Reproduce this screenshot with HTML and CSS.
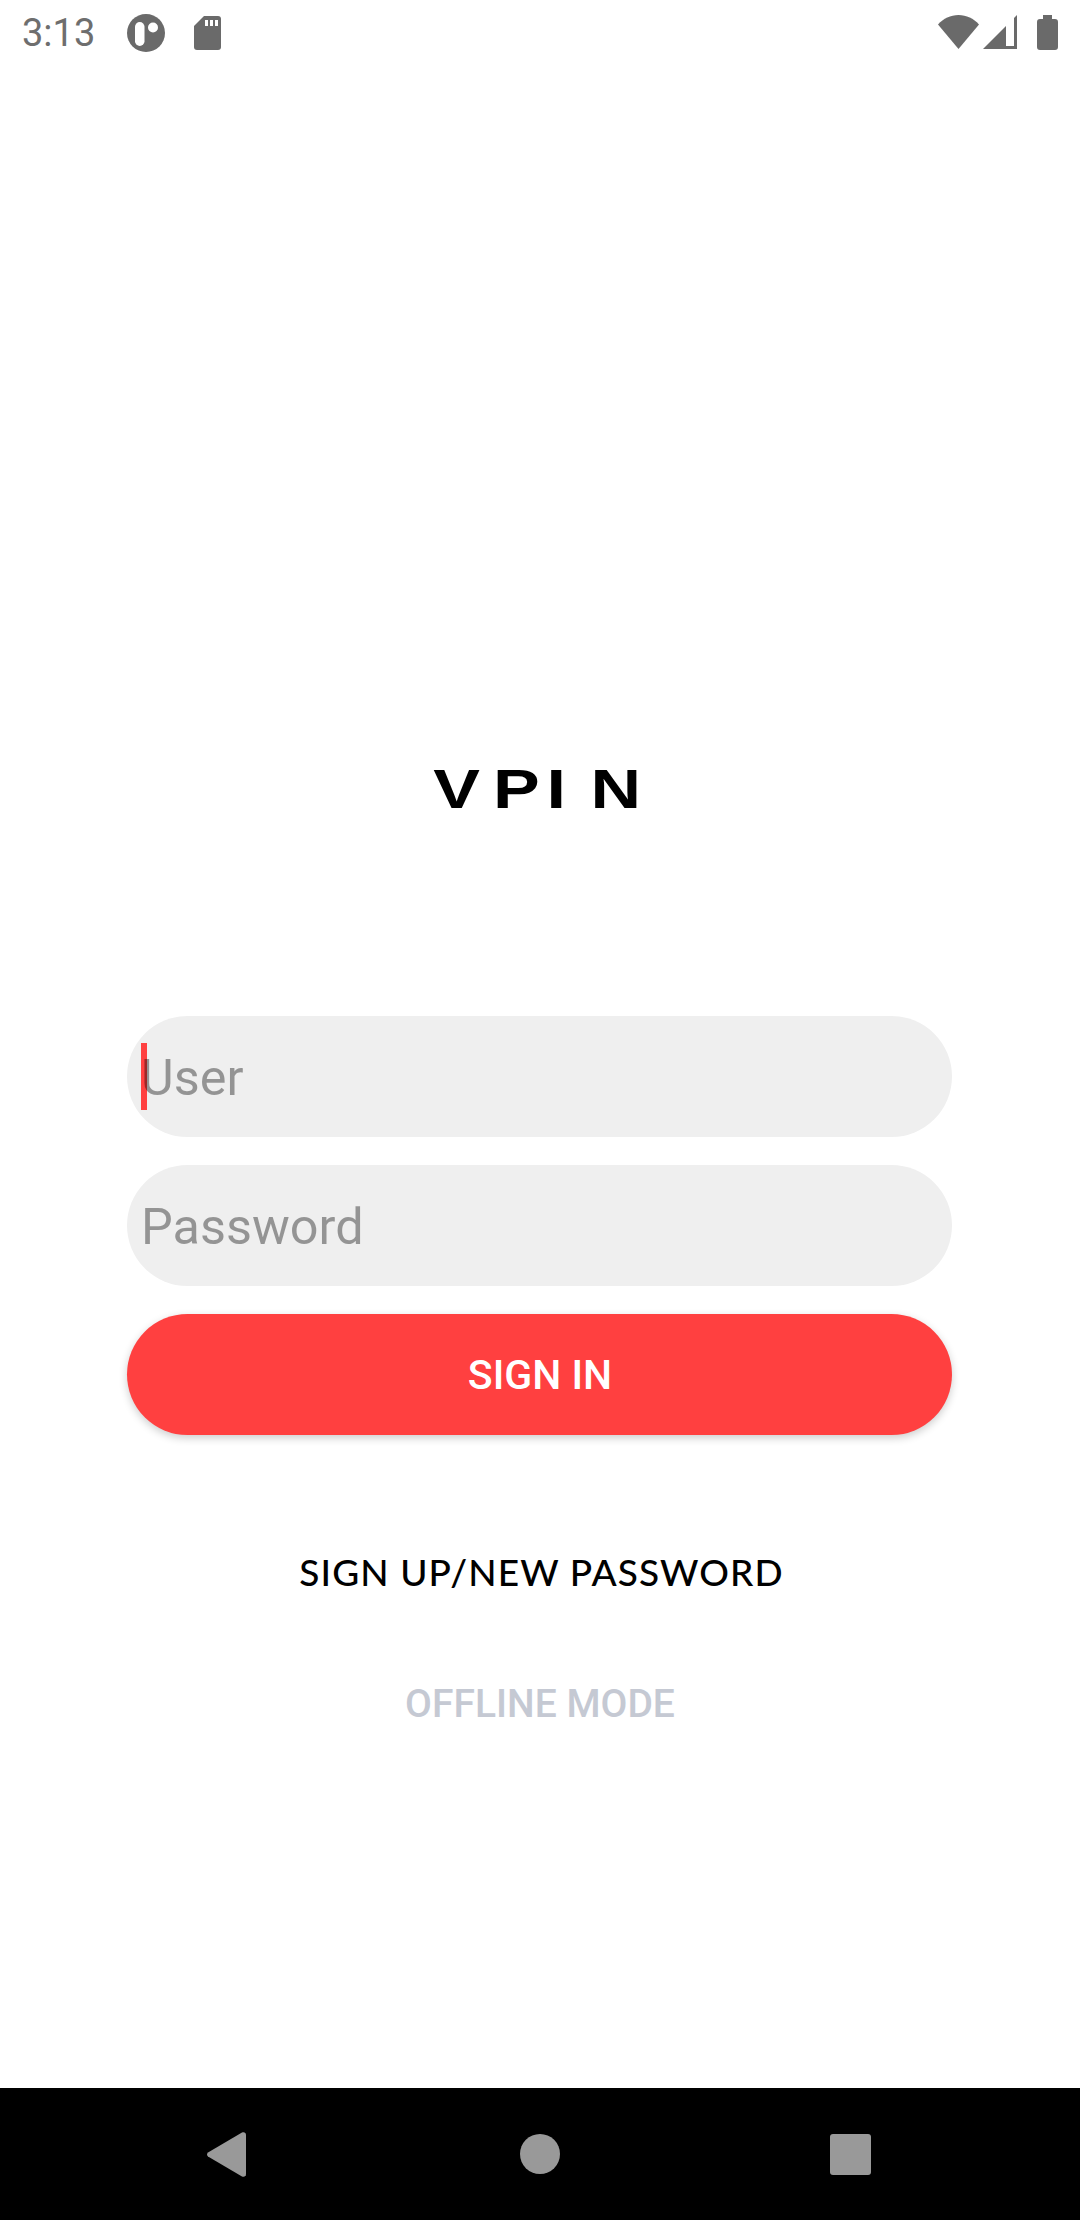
FILE: index.html
```html
<!DOCTYPE html>
<html lang="en">
<head>
<meta charset="utf-8">
<title>VPIN</title>
<link rel="stylesheet" href="styles.css">
</head>
<body>
<div class="screen">
  <header class="status">
    <div class="status-left">
      <span class="time">3:13</span>
      <svg class="ic-app" width="38" height="38" viewBox="0 0 38 38"><circle cx="19" cy="19" r="19" fill="#6a6a6a"/><rect x="8" y="8" width="9.500" height="24" rx="4.750" fill="#fff"/><circle cx="26" cy="13.500" r="5" fill="#fff"/></svg>
      <svg class="ic-sd" width="27" height="34" viewBox="0 0 27 34"><path d="M10 0H24a3 3 0 0 1 3 3V31a3 3 0 0 1-3 3H3a3 3 0 0 1-3-3V10Z" fill="#6a6a6a"/><path d="M11 4h3v6h-3zM16 4h3v6h-3zM21 4h3v6h-3z" fill="#fff"/></svg>
    </div>
    <div class="status-right">
      <svg class="ic-wifi" width="41" height="34" viewBox="0 0 41 34"><path d="M20.500 34 0 9.500C5.500 3.500 12.500 0 20.500 0S35.500 3.500 41 9.500Z" fill="#6a6a6a"/></svg>
      <svg class="ic-signal" width="34" height="34" viewBox="0 0 34 34"><path d="M34 0V34H0Z" fill="#6a6a6a"/><path d="M23 10 31 2V31H23Z" fill="#fff"/></svg>
      <svg class="ic-battery" width="21" height="35" viewBox="0 0 21 35"><path d="M6 0H15V4H18A3 3 0 0 1 21 7V32A3 3 0 0 1 18 35H3A3 3 0 0 1 0 32V7A3 3 0 0 1 3 4H6Z" fill="#6a6a6a"/></svg>
    </div>
  </header>

  <main class="login">
    <h1 class="logo"><span class="logo-v">V</span><span class="logo-p">P</span><span class="logo-i">I</span>N</h1>
    <form class="form">
      <div class="field"><span class="caret"></span><span class="placeholder">User</span></div>
      <div class="field"><span class="placeholder">Password</span></div>
      <button class="signin" type="button">SIGN IN</button>
    </form>
    <a class="link-signup">SIGN UP/NEW PASSWORD</a>
    <a class="link-offline">OFFLINE MODE</a>
  </main>

  <nav class="navbar">
    <svg width="39" height="45" viewBox="0 0 39 45" class="nav-back"><path d="M1 20.500 35 .6C37 -.3 39 .6 39 3V42C39 44.400 37 45.300 35 44.400L1 24.500C-.3 23.400-.3 21.600 1 20.500Z" fill="#999"/></svg>
    <span class="nav-home"></span>
    <span class="nav-recent"></span>
  </nav>
</div>
</body>
</html>
```
FILE: styles.css
```css
* { box-sizing: border-box; }
html, body { margin: 0; padding: 0; }
body { font-family: Roboto, "Liberation Sans", sans-serif; background: #fff; }
.screen { width: 1080px; height: 2220px; display: flex; flex-direction: column; overflow: hidden; background: #fff; }

.status { height: 66px; flex: none; display: flex; justify-content: space-between; align-items: flex-start; padding: 14px 22px 0 22px; }
.status-left { display: flex; align-items: flex-start; }
.time { font-size: 38px; line-height: 38px; color: #6e6e6e; width: 105px; }
.ic-sd { margin: 2px 0 0 29px; display: block; }
.ic-app { display: block; }
.status-right { display: flex; align-items: flex-start; padding-top: 1px; }
.ic-wifi { display: block; }
.ic-signal { display: block; margin-left: 4px; }
.ic-battery { display: block; margin-left: 20px; }

.login { flex: 1; display: flex; flex-direction: column; align-items: center; }
.logo { margin: 691px 5px 0 0; height: 259px; font-family: "Liberation Sans", sans-serif; font-weight: 700; font-size: 56px; line-height: 64px; color: #000; transform: scaleX(1.25); }
.logo-v { letter-spacing: 10.400px; }
.logo-p { letter-spacing: 5.600px; }
.logo-i { letter-spacing: 19.600px; }

.form { width: 825px; margin-right: 1px; display: flex; flex-direction: column; gap: 28px; }
.field { position: relative; height: 121px; border-radius: 60.500px; background: #efefef; display: flex; align-items: center; padding: 2px 0 0 14px; }
.placeholder { position: relative; font-size: 50.400px; line-height: 60px; color: rgba(0,0,0,.38); }
.caret { position: absolute; left: 14px; top: 27px; width: 6px; height: 67px; background: #ff4040; }
.signin { height: 121px; border: 0; border-radius: 60.500px; background: #ff4040; color: #fff; font-family: Roboto, sans-serif; font-weight: 500; font-size: 41px; box-shadow: 0 3px 8px rgba(0,0,0,.2); padding: 0 0 0 1px; }

.link-signup { margin-top: 115px; margin-left: 3px; font-family: Lato, sans-serif; font-weight: 500; font-size: 37px; line-height: 44px; color: #000; letter-spacing: 1.100px; }
.link-offline { margin-top: 88px; font-family: Roboto, sans-serif; font-weight: 500; font-size: 39px; line-height: 44px; color: #c5c9d3; }

.navbar { height: 132px; flex: none; background: #000; display: flex; align-items: center; justify-content: space-between; padding: 0 209px 0 207px; }
.nav-back { display: block; }
.nav-home { width: 40px; height: 40px; margin-left: 4px; border-radius: 50%; background: #999; }
.nav-recent { width: 41px; height: 41px; border-radius: 3px; background: #999; }
```
